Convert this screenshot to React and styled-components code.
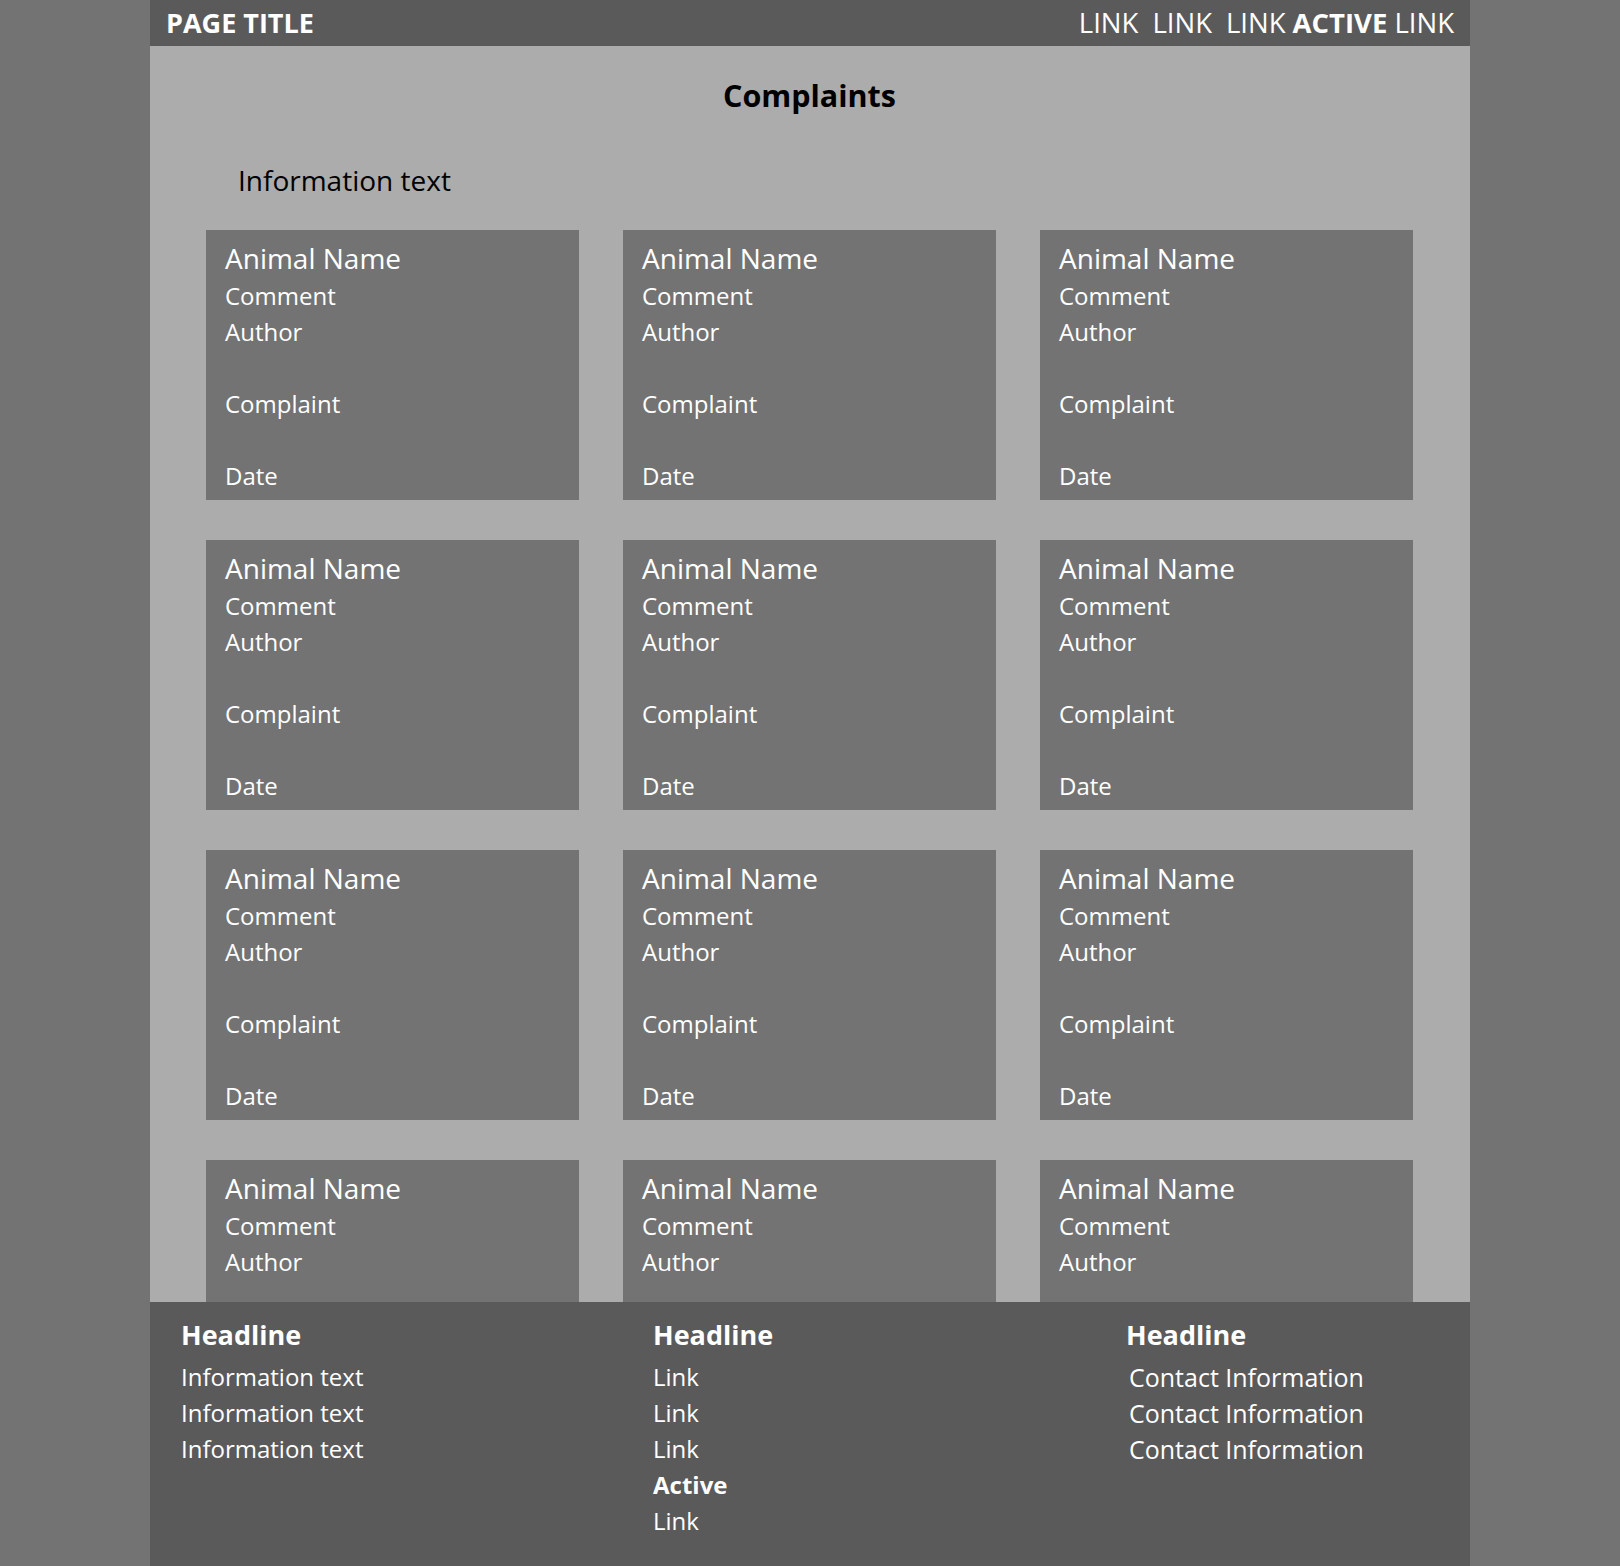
import React from 'react';
import styled, { createGlobalStyle } from 'styled-components';

const GlobalStyle = createGlobalStyle`
  body {
    margin: 0;
    background: #737373;
    font-family: 'Open Sans', 'Noto Sans', sans-serif;
  }
`;

const Page = styled.div`
  width: 1320px;
  margin: 0 auto;
  display: flex;
  flex-direction: column;
`;

const Header = styled.header`
  height: 46px;
  background: #5a5a5a;
  display: flex;
  align-items: center;
  justify-content: space-between;
  padding: 0 16px 0 16px;
  color: #fff;
  line-height: 46px;
`;

const PageTitle = styled.div`
  font-size: 27px;
  font-weight: 700;
`;

const Nav = styled.nav`
  display: flex;
  gap: 7px;
  font-size: 27.5px;
`;

const NavLink = styled.span`
  font-weight: ${({ $active }) => ($active ? 700 : 400)};
  margin-right: ${({ $spaced }) => ($spaced ? '7px' : '0')};
`;

const Main = styled.main`
  height: 1256px;
  overflow: hidden;
  background: #acacac;
  padding: 29px 57px 0 56px;
  box-sizing: border-box;
`;

const Title = styled.h1`
  margin: 0;
  text-align: center;
  font-size: 30.5px;
  line-height: 40px;
  font-weight: 700;
  color: #000;
`;

const Intro = styled.p`
  margin: 47px 0 32px 32px;
  font-size: 28px;
  line-height: 36px;
  color: #000;
`;

const Grid = styled.div`
  display: grid;
  grid-template-columns: repeat(3, 373px);
  column-gap: 44px;
  row-gap: 40px;
`;

const Card = styled.div`
  height: 270px;
  background: #737373;
  color: #fff;
  padding: 8px 18px 0 19px;
  box-sizing: border-box;
`;

const AnimalName = styled.div`
  font-size: 28px;
  line-height: 40px;
`;

const CardLine = styled.div`
  font-size: 24px;
  line-height: 36px;
  margin-top: ${({ $gap }) => ($gap ? '36px' : '0')};
`;

const Footer = styled.footer`
  height: 264px;
  background: #5a5a5a;
  color: #fff;
  padding: 12px 0 0 31px;
  box-sizing: border-box;
  display: grid;
  grid-template-columns: 472px 473px 1fr;
  align-items: start;
`;

const FooterCol = styled.div`
  display: flex;
  flex-direction: column;
`;

const Headline = styled.div`
  font-size: 27px;
  font-weight: 700;
  line-height: 42px;
  margin-bottom: 3px;
`;

const FooterItem = styled.div`
  font-size: ${({ $large }) => ($large ? '25px' : '24px')};
  line-height: 36px;
  font-weight: ${({ $active }) => ($active ? 700 : 400)};
  padding-left: ${({ $indent }) => ($indent ? '3px' : '0')};
`;

// the last row sits under the footer: only its first lines show
const cards = Array.from({ length: 12 }, (_, i) => ({ id: i, partial: i >= 9 }));

function ComplaintCard({ partial }) {
  return (
    <Card>
      <AnimalName>Animal Name</AnimalName>
      <CardLine>Comment</CardLine>
      <CardLine>Author</CardLine>
      {!partial && (
        <>
          <CardLine $gap>Complaint</CardLine>
          <CardLine $gap>Date</CardLine>
        </>
      )}
    </Card>
  );
}

export default function App() {
  return (
    <>
      <GlobalStyle />
      <Page>
        <Header>
          <PageTitle>PAGE TITLE</PageTitle>
          <Nav>
            <NavLink $spaced>LINK</NavLink>
            <NavLink $spaced>LINK</NavLink>
            <NavLink>LINK</NavLink>
            <NavLink $active>ACTIVE</NavLink>
            <NavLink>LINK</NavLink>
          </Nav>
        </Header>
        <Main>
          <Title>Complaints</Title>
          <Intro>Information text</Intro>
          <Grid>
            {cards.map((c) => (
              <ComplaintCard key={c.id} partial={c.partial} />
            ))}
          </Grid>
        </Main>
        <Footer>
          <FooterCol>
            <Headline>Headline</Headline>
            <FooterItem>Information text</FooterItem>
            <FooterItem>Information text</FooterItem>
            <FooterItem>Information text</FooterItem>
          </FooterCol>
          <FooterCol>
            <Headline>Headline</Headline>
            <FooterItem>Link</FooterItem>
            <FooterItem>Link</FooterItem>
            <FooterItem>Link</FooterItem>
            <FooterItem $active>Active</FooterItem>
            <FooterItem>Link</FooterItem>
          </FooterCol>
          <FooterCol>
            <Headline>Headline</Headline>
            <FooterItem $large $indent>Contact Information</FooterItem>
            <FooterItem $large $indent>Contact Information</FooterItem>
            <FooterItem $large $indent>Contact Information</FooterItem>
          </FooterCol>
        </Footer>
      </Page>
    </>
  );
}
